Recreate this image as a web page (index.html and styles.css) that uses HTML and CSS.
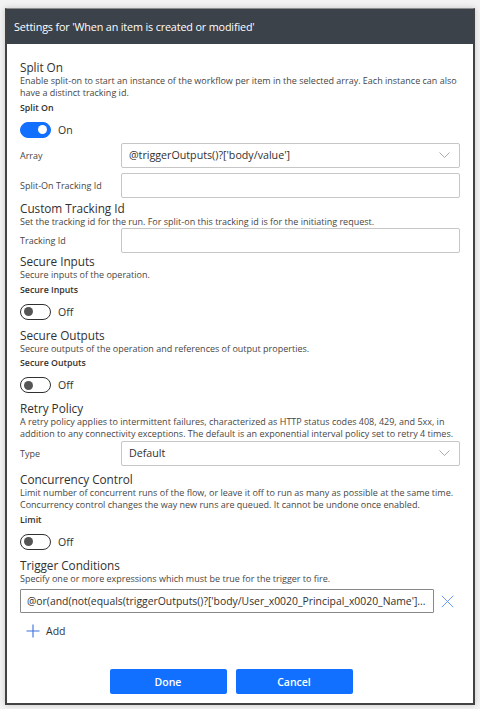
FILE: index.html
```html
<!DOCTYPE html>
<html>
<head>
<meta charset="utf-8">
<link rel="stylesheet" href="styles.css">
</head>
<body>
<div class="dialog">
  <div class="header">Settings for 'When an item is created or modified'</div>
  <div class="body">
    <div class="title">Split On</div>
    <div class="desc">Enable split-on to start an instance of the workflow per item in the selected array. Each instance can also have a distinct tracking id.</div>
    <div class="blabel">Split On</div>
    <div class="toggle-row"><span class="toggle on"><span class="knob"></span></span><span class="tlabel">On</span></div>
    <div class="field first">
      <div class="flabel">Array</div>
      <div class="input select"><span>@triggerOutputs()?['body/value']</span>
        <svg class="chev" width="11" height="6" viewBox="0 0 11 6"><path d="M0.5 0.5 L5.5 5.5 L10.5 0.5" fill="none" stroke="#a19f9d" stroke-width="0.9"/></svg>
      </div>
    </div>
    <div class="field">
      <div class="flabel">Split-On Tracking Id</div>
      <div class="input"></div>
    </div>

    <div class="title after-field">Custom Tracking Id</div>
    <div class="desc">Set the tracking id for the run. For split-on this tracking id is for the initiating request.</div>
    <div class="field nogap">
      <div class="flabel">Tracking Id</div>
      <div class="input"></div>
    </div>

    <div class="title">Secure Inputs</div>
    <div class="desc">Secure inputs of the operation.</div>
    <div class="blabel">Secure Inputs</div>
    <div class="toggle-row"><span class="toggle"><span class="knob"></span></span><span class="tlabel">Off</span></div>

    <div class="title">Secure Outputs</div>
    <div class="desc">Secure outputs of the operation and references of output properties.</div>
    <div class="blabel">Secure Outputs</div>
    <div class="toggle-row"><span class="toggle"><span class="knob"></span></span><span class="tlabel">Off</span></div>

    <div class="title">Retry Policy</div>
    <div class="desc">A retry policy applies to intermittent failures, characterized as HTTP status codes 408, 429, and 5xx, in addition to any connectivity exceptions. The default is an exponential interval policy set to retry 4 times.</div>
    <div class="field nogap">
      <div class="flabel">Type</div>
      <div class="input select"><span>Default</span>
        <svg class="chev" width="11" height="6" viewBox="0 0 11 6"><path d="M0.5 0.5 L5.5 5.5 L10.5 0.5" fill="none" stroke="#a19f9d" stroke-width="0.9"/></svg>
      </div>
    </div>

    <div class="title after-select">Concurrency Control</div>
    <div class="desc">Limit number of concurrent runs of the flow, or leave it off to run as many as possible at the same time. Concurrency control changes the way new runs are queued. It cannot be undone once enabled.</div>
    <div class="blabel">Limit</div>
    <div class="toggle-row"><span class="toggle"><span class="knob"></span></span><span class="tlabel">Off</span></div>

    <div class="title">Trigger Conditions</div>
    <div class="desc">Specify one or more expressions which must be true for the trigger to fire.</div>
    <div class="cond-row">
      <div class="cond-input">@or(and(not(equals(triggerOutputs()?['body/User_x0020_Principal_x0020_Name']...</div>
      <svg class="xicon" width="13" height="13" viewBox="0 0 13 13"><path d="M0.8 0.8 L12.2 12.2 M12.2 0.8 L0.8 12.2" stroke="#6a9bfa" stroke-width="1" fill="none"/></svg>
    </div>
    <div class="add-row">
      <svg width="14" height="14" viewBox="0 0 14 14"><path d="M7 0.5 V13.5 M0.5 7 H13.5" stroke="#3b6fe0" stroke-width="1.1" fill="none"/></svg>
      <span>Add</span>
    </div>
    <div class="buttons">
      <button class="btn">Done</button>
      <button class="btn">Cancel</button>
    </div>
  </div>
</div>
</body>
</html>
```
FILE: styles.css
```css
* { box-sizing: border-box; }
html, body { margin: 0; padding: 0; }
body {
  background: #f3f3f3;
  font-family: "Open Sans", "Noto Sans", sans-serif;
  color: #323130;
  width: 480px;
  height: 709px;
  padding: 8px 5px 4px 5px;
}
.dialog {
  width: 470px;
  height: 697px;
  border: 2px solid #424242;
  border-top: 1px solid #8c8c8c;
  background: #fff;
  box-shadow: 0 0 6px rgba(0,0,0,0.18);
  display: flex;
  flex-direction: column;
}
.header {
  background: #3b4249;
  color: #ffffff;
  height: 35px;
  font-size: 10.8px;
  line-height: 35px;
  padding-left: 7px;
  letter-spacing: -0.15px;
}
.body {
  padding: 15px 13px 0 13px;
  display: flex;
  flex-direction: column;
}
.title {
  font-size: 11.8px;
  line-height: 16px;
  color: #323130;
  letter-spacing: -0.05px;
}
.title.after-field { margin-top: 2px; }
.title.after-select { margin-top: 5px; }
.desc {
  font-size: 9px;
  line-height: 12.4px;
  color: #484644;
}
.blabel {
  font-size: 8.8px;
  font-weight: 600;
  line-height: 14px;
  margin-top: 1px;
  color: #323130;
}
.toggle-row {
  display: flex;
  align-items: center;
  margin-top: 7px;
  height: 16px;
  margin-bottom: 7px;
}
.toggle {
  width: 31px;
  height: 16px;
  border-radius: 8px;
  border: 1px solid #323130;
  background: #fff;
  position: relative;
  display: inline-block;
}
.toggle .knob {
  position: absolute;
  top: 2.5px;
  left: 3px;
  width: 9px;
  height: 9px;
  border-radius: 50%;
  background: #555;
}
.toggle.on {
  background: #1170ff;
  border-color: #1170ff;
}
.toggle.on .knob {
  left: auto;
  right: 3px;
  background: #fff;
}
.tlabel {
  font-size: 10.5px;
  margin-left: 7px;
  color: #323130;
}
.field {
  display: flex;
  align-items: center;
  margin-top: 5px;
}
.field.first { margin-top: -2px; }
.field.nogap { margin-top: 0; }
.flabel {
  width: 101px;
  font-size: 9px;
  color: #484644;
}
.input {
  flex: 1;
  height: 25px;
  border: 1px solid #c6c6c6;
  border-radius: 2px;
  display: flex;
  align-items: center;
  padding: 0 7px;
  font-size: 10.7px;
  color: #323130;
}
.input.select span { flex: 1; }
.chev { margin-right: 2px; }
.cond-row {
  display: flex;
  align-items: center;
  margin-top: 4px;
}
.cond-input {
  width: 414px;
  height: 24px;
  border: 1px solid #8a8886;
  border-radius: 1px;
  font-size: 10.4px;
  line-height: 22px;
  padding-left: 6px;
  white-space: nowrap;
  overflow: hidden;
  color: #323130;
}
.xicon { margin-left: 7px; }
.add-row {
  display: flex;
  align-items: center;
  margin-top: 11px;
  padding-left: 6px;
  font-size: 10.5px;
  color: #323130;
}
.add-row span { margin-left: 6px; }
.buttons {
  display: flex;
  justify-content: center;
  gap: 9px;
  margin-top: 31px;
  padding-right: 18px;
}
.btn {
  width: 117px;
  height: 25px;
  background: #1170ff;
  color: #fff;
  border: none;
  border-radius: 2px;
  font-family: "Open Sans", "Noto Sans", sans-serif;
  font-size: 10.5px;
  font-weight: 600;
}
```
